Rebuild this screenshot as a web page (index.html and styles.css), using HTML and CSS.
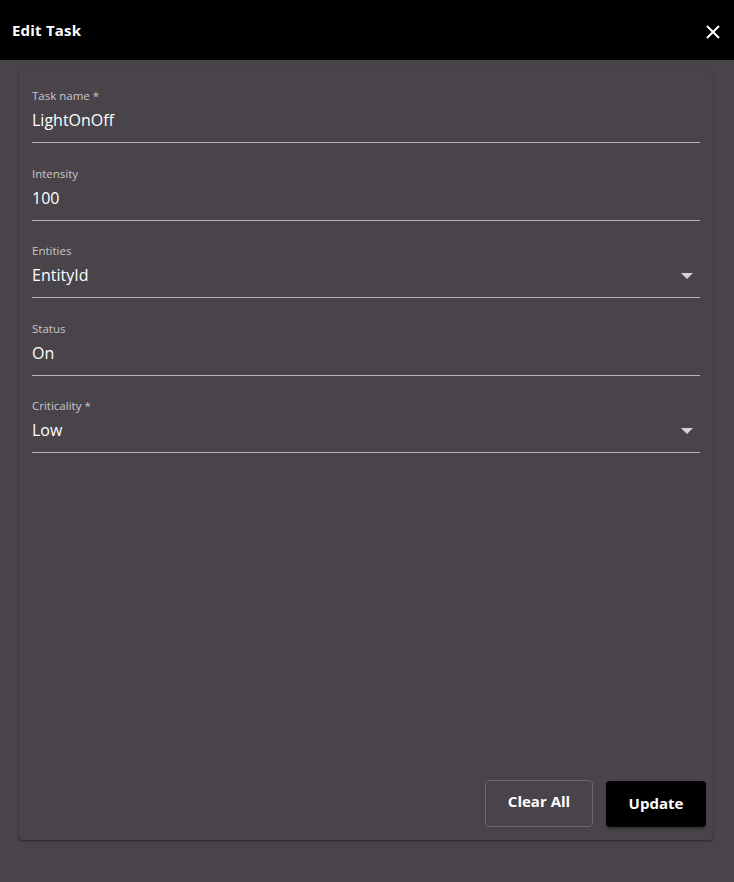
FILE: index.html
```html
<!DOCTYPE html>
<html>
<head>
<meta charset="utf-8">
<link rel="stylesheet" href="styles.css">
</head>
<body>
<div class="page">
  <header class="header">
    <span class="title">Edit Task</span>
    <button class="close" aria-label="close">
      <svg width="14" height="14" viewBox="0 0 14 14"><path d="M1 1L13 13M13 1L1 13" stroke="#fff" stroke-width="2" fill="none"/></svg>
    </button>
  </header>
  <main class="content">
    <section class="card">
      <div class="fields">
        <div class="field">
          <label class="label">Task name *</label>
          <div class="value">LightOnOff</div>
        </div>
        <div class="field">
          <label class="label">Intensity</label>
          <div class="value">100</div>
        </div>
        <div class="field select">
          <label class="label">Entities</label>
          <div class="value">EntityId</div>
          <span class="arrow"></span>
        </div>
        <div class="field">
          <label class="label">Status</label>
          <div class="value">On</div>
        </div>
        <div class="field select">
          <label class="label">Criticality *</label>
          <div class="value">Low</div>
          <span class="arrow"></span>
        </div>
      </div>
      <div class="actions">
        <button class="btn btn-outline">Clear All</button>
        <button class="btn btn-primary">Update</button>
      </div>
    </section>
  </main>
</div>
</body>
</html>
```
FILE: styles.css
```css
* { box-sizing: border-box; }
html, body { margin: 0; padding: 0; }
body {
  font-family: "Open Sans", "Noto Sans", sans-serif;
  background: #48444a;
  color: #fff;
  width: 734px;
  height: 882px;
  overflow: hidden;
}
.page { display: flex; flex-direction: column; height: 882px; }
.header {
  height: 60px;
  background: #000;
  display: flex;
  align-items: center;
  justify-content: space-between;
  padding: 0 14px 0 12px;
}
.title { font-size: 15px; font-weight: 700; letter-spacing: 0.2px; }
.close {
  background: none; border: 0; padding: 0; width: 14px; height: 14px;
  display: flex; margin-top: 4px;
}
.content { padding: 12px 21px 0 19px; }
.card {
  background: #48444a;
  border-radius: 4px;
  box-shadow: 0 1px 3px rgba(0,0,0,0.35), 0 1px 1px rgba(0,0,0,0.15);
  height: 768px;
  display: flex;
  flex-direction: column;
  justify-content: space-between;
  padding: 16px 13px 13px 13px;
}
.fields { display: flex; flex-direction: column; gap: 22.5px; }
.field {
  position: relative;
  border-bottom: 1px solid #b7b3b9;
  height: 55px;
  display: flex;
  flex-direction: column;
}
.label { font-size: 11.5px; color: #c9c6cb; line-height: 16px; }
.value { font-size: 16px; line-height: 22px; margin-top: 5px; color: #fff; }
.arrow {
  position: absolute;
  right: 7px;
  top: 30px;
  width: 0; height: 0;
  border-left: 6px solid transparent;
  border-right: 6px solid transparent;
  border-top: 6px solid #d6d3d8;
}
.actions { display: flex; justify-content: flex-end; gap: 13px; align-items: center; margin-right: -6px; }
.btn {
  font-family: inherit;
  font-size: 15px;
  font-weight: 700;
  color: #fff;
  border-radius: 4px;
  cursor: pointer;
}
.btn-outline {
  background: transparent;
  border: 1px solid #6b676e;
  width: 108px; height: 47px;
  padding-bottom: 6px;
}
.btn-primary {
  background: #000;
  border: 0;
  width: 100px; height: 46px;
  padding-bottom: 3px;
  box-shadow: 0 2px 3px rgba(0,0,0,0.3);
}
```
